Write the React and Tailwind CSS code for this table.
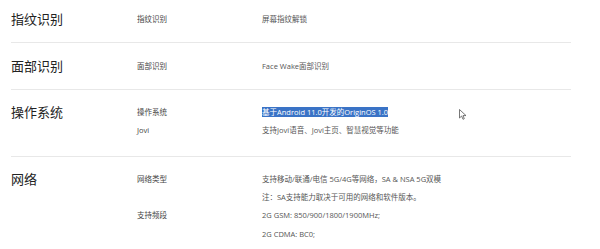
import React from "react";

const font = { fontFamily: '"Open Sans", "Noto Sans CJK SC", sans-serif' };

function Row({ label, children, className = "" }) {
  return (
    <div className={`flex items-center h-[18px] ${className}`}>
      <div className="w-[125px] shrink-0 text-[7.5px] text-[#444]">{label}</div>
      <div className="text-[7.5px] text-[#555] whitespace-nowrap">{children}</div>
    </div>
  );
}

function Section({ title, children, className = "", border = true }) {
  return (
    <div className={`flex ${border ? "border-b border-[#e8e8e8]" : ""} ${className}`}>
      <div className="w-[126px] shrink-0 h-[18px] flex items-center text-[13px] text-[#222]">{title}</div>
      <div className="flex flex-col">{children}</div>
    </div>
  );
}

export default function App() {
  return (
    <div className="w-[600px] h-[249px] bg-white overflow-hidden relative" style={font}>
      <div className="ml-[11px] w-[560px]">
        <Section title="指纹识别" className="pt-[11px] pb-[13px] h-[43px]">
          <Row label="指纹识别">屏幕指纹解锁</Row>
        </Section>
        <Section title="面部识别" className="pt-[15px] pb-[13px] h-[47px]">
          <Row label="面部识别">Face Wake面部识别</Row>
        </Section>
        <Section title="操作系统" className="pt-[14px] pb-[15px] h-[67px]">
          <Row label="操作系统">
            <span className="bg-[#3a73c6] text-white">基于Android 11.0开发的OriginOS 1.0</span>
          </Row>
          <Row label="Jovi">支持Jovi语音、Jovi主页、智慧视觉等功能</Row>
        </Section>
        <Section title="网络" className="pt-[14px]" border={false}>
          <Row label="网络类型">支持移动/联通/电信 5G/4G等网络，SA &amp; NSA 5G双模</Row>
          <Row label="">注：SA支持能力取决于可用的网络和软件版本。</Row>
          <Row label="支持频段">2G GSM: 850/900/1800/1900MHz;</Row>
          <Row label="" className="mt-[1px]">2G CDMA: BC0;</Row>
        </Section>
      </div>
      <svg className="absolute left-[459px] top-[109px]" width="8" height="11" viewBox="0 0 8 11">
        <path d="M0.5 0.5 L0.5 9 L2.6 7 L4 10.3 L5.3 9.7 L4 6.6 L7 6.6 Z" fill="white" stroke="#555" strokeWidth="0.8" />
      </svg>
    </div>
  );
}
